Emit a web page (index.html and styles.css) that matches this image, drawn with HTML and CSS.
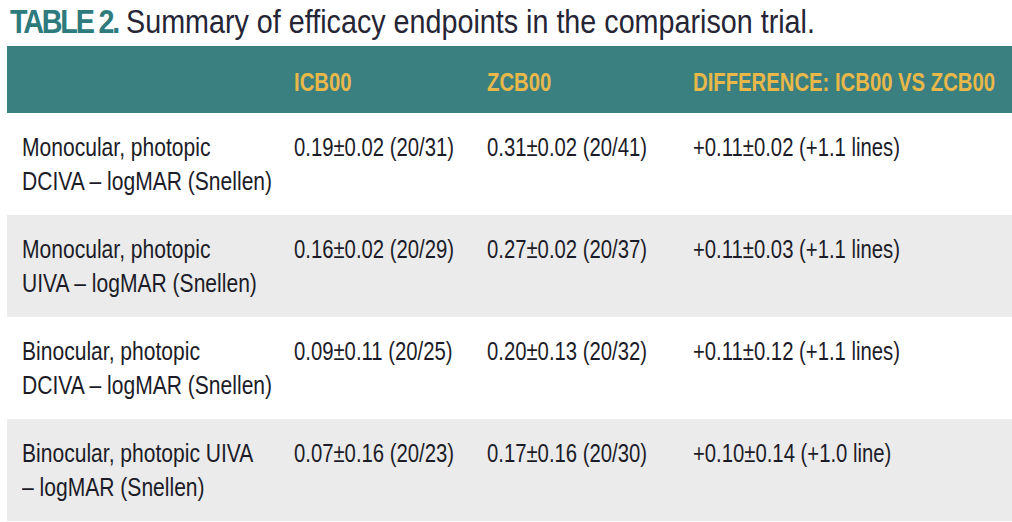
FILE: index.html
```html
<!DOCTYPE html>
<html>
<head>
<meta charset="utf-8">
<link rel="stylesheet" href="styles.css">
</head>
<body>
<div class="page">
  <h1 class="title"><span class="t"><span class="label">TABLE 2.</span> Summary of efficacy endpoints in the comparison trial.</span></h1>
  <div class="table">
    <div class="row head">
      <div class="cell"></div>
      <div class="cell"><span class="t">ICB00</span></div>
      <div class="cell"><span class="t">ZCB00</span></div>
      <div class="cell"><span class="t">DIFFERENCE: ICB00 VS ZCB00</span></div>
    </div>
    <div class="row">
      <div class="cell"><span class="t">Monocular, photopic<br>DCIVA – logMAR (Snellen)</span></div>
      <div class="cell"><span class="t">0.19±0.02 (20/31)</span></div>
      <div class="cell"><span class="t">0.31±0.02 (20/41)</span></div>
      <div class="cell"><span class="t">+0.11±0.02 (+1.1 lines)</span></div>
    </div>
    <div class="row alt">
      <div class="cell"><span class="t">Monocular, photopic<br>UIVA – logMAR (Snellen)</span></div>
      <div class="cell"><span class="t">0.16±0.02 (20/29)</span></div>
      <div class="cell"><span class="t">0.27±0.02 (20/37)</span></div>
      <div class="cell"><span class="t">+0.11±0.03 (+1.1 lines)</span></div>
    </div>
    <div class="row">
      <div class="cell"><span class="t">Binocular, photopic<br>DCIVA – logMAR (Snellen)</span></div>
      <div class="cell"><span class="t">0.09±0.11 (20/25)</span></div>
      <div class="cell"><span class="t">0.20±0.13 (20/32)</span></div>
      <div class="cell"><span class="t">+0.11±0.12 (+1.1 lines)</span></div>
    </div>
    <div class="row alt">
      <div class="cell"><span class="t">Binocular, photopic UIVA<br>– logMAR (Snellen)</span></div>
      <div class="cell"><span class="t">0.07±0.16 (20/23)</span></div>
      <div class="cell"><span class="t">0.17±0.16 (20/30)</span></div>
      <div class="cell"><span class="t">+0.10±0.14 (+1.0 line)</span></div>
    </div>
  </div>
</div>
</body>
</html>
```
FILE: styles.css
```css
html, body {
  margin: 0;
  padding: 0;
  background: #ffffff;
}
.page {
  width: 1012px;
  height: 522px;
  overflow: hidden;
  font-family: "Liberation Sans", Arial, sans-serif;
  color: #1c1c28;
}
.t {
  display: block;
  width: calc(100% / var(--s, 0.78));
  transform: scaleX(var(--s, 0.78));
  transform-origin: 0 0;
  white-space: nowrap;
}
.title {
  --s: 0.87;
  margin: 0;
  padding: 0 0 0 10px;
  height: 46px;
  font-size: 33px;
  line-height: 44px;
  font-weight: normal;
  color: #252535;
  white-space: nowrap;
}
.label {
  font-weight: bold;
  color: #2e7b7d;
  letter-spacing: -2.5px;
}
.table {
  margin-left: 7px;
}
.row {
  display: grid;
  grid-template-columns: 287px 193px 206px 1fr;
  height: 102px;
  box-sizing: border-box;
  padding-top: 17px;
  font-size: 26px;
  line-height: 34px;
}
.row .cell:first-child {
  --s: 0.81;
  padding-left: 15px;
}
.row.alt {
  background: #ebebeb;
}
.row.head {
  height: 67px;
  background: #3a8080;
  color: #e9b849;
  font-weight: bold;
  align-items: center;
  padding-top: 4px;
}
```
